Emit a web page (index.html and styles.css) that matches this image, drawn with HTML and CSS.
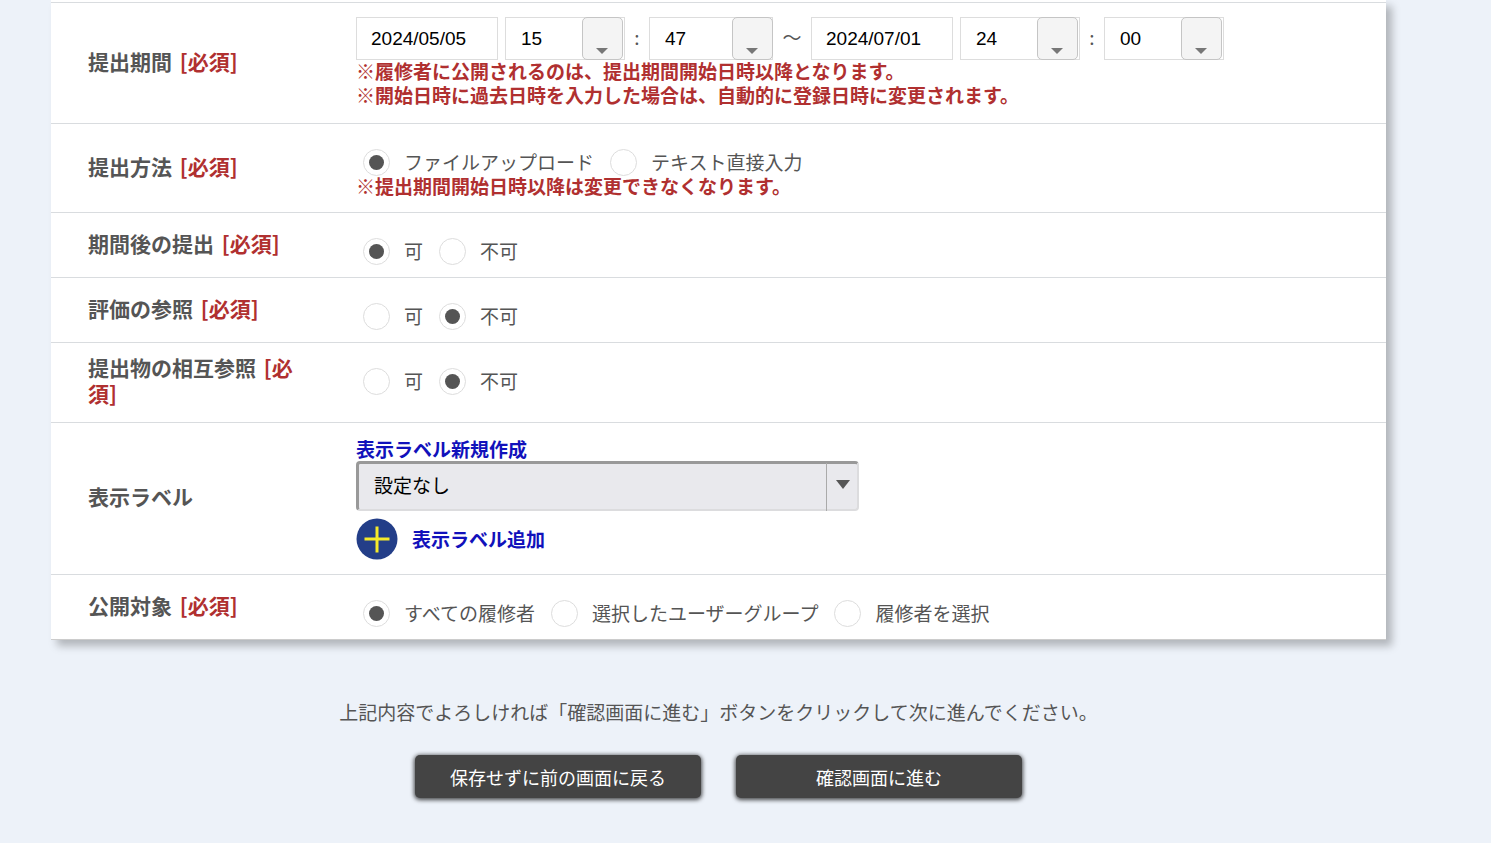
FILE: index.html
```html
<!DOCTYPE html>
<html lang="ja">
<head>
	<meta charset="utf-8">
	<title>レポート登録</title>
	<link rel="stylesheet" href="styles.css">
</head>
<body>
<form>
	<table class="settings">
		<tr class="period-row">
			<th scope="row">提出期間 <span class="required">[必須]</span></th>
			<td>
				<div class="period">
					<input type="text" class="date" value="2024/05/05" aria-label="開始日">
					<div class="combo">
						<select aria-label="開始時"><option>15</option></select>
						<span class="combo-arrow"></span>
					</div>
					<span class="colon">:</span>
					<div class="combo wide">
						<select aria-label="開始分"><option>47</option></select>
						<span class="combo-arrow"></span>
					</div>
					<span class="tilde">～</span>
					<input type="text" class="date" value="2024/07/01" aria-label="終了日">
					<div class="combo">
						<select aria-label="終了時"><option>24</option></select>
						<span class="combo-arrow"></span>
					</div>
					<span class="colon">:</span>
					<div class="combo">
						<select aria-label="終了分"><option>00</option></select>
						<span class="combo-arrow"></span>
					</div>
				</div>
				<p class="note">※履修者に公開されるのは、提出期間開始日時以降となります。</p>
				<p class="note">※開始日時に過去日時を入力した場合は、自動的に登録日時に変更されます。</p>
			</td>
		</tr>
		<tr>
			<th scope="row">提出方法 <span class="required">[必須]</span></th>
			<td>
				<div class="radios">
					<label><input type="radio" name="method" checked>ファイルアップロード</label>
					<label><input type="radio" name="method">テキスト直接入力</label>
				</div>
				<p class="note">※提出期間開始日時以降は変更できなくなります。</p>
			</td>
		</tr>
		<tr>
			<th scope="row">期間後の提出 <span class="required">[必須]</span></th>
			<td>
				<div class="radios">
					<label><input type="radio" name="late" checked>可</label>
					<label><input type="radio" name="late">不可</label>
				</div>
			</td>
		</tr>
		<tr>
			<th scope="row">評価の参照 <span class="required">[必須]</span></th>
			<td>
				<div class="radios">
					<label><input type="radio" name="grade">可</label>
					<label><input type="radio" name="grade" checked>不可</label>
				</div>
			</td>
		</tr>
		<tr>
			<th scope="row">提出物の相互参照 <span class="required">[必須]</span></th>
			<td>
				<div class="radios">
					<label><input type="radio" name="mutual">可</label>
					<label><input type="radio" name="mutual" checked>不可</label>
				</div>
			</td>
		</tr>
		<tr>
			<th scope="row">表示ラベル</th>
			<td>
				<a href="#" class="new-label">表示ラベル新規作成</a>
				<div class="label-select">
					<select aria-label="表示ラベル"><option>設定なし</option></select>
					<span class="label-arrow"></span>
				</div>
				<a href="#" class="add-label">
					<svg width="42" height="42" viewBox="0 0 42 42">
						<circle cx="21" cy="21" r="20.5" fill="#233e88"/>
						<path d="M8.500 21h25M21 8.500v26" stroke="#f5ea2a" stroke-width="3"/>
					</svg>
					表示ラベル追加
				</a>
			</td>
		</tr>
		<tr>
			<th scope="row">公開対象 <span class="required">[必須]</span></th>
			<td>
				<div class="radios">
					<label><input type="radio" name="target" checked>すべての履修者</label>
					<label><input type="radio" name="target">選択したユーザーグループ</label>
					<label><input type="radio" name="target">履修者を選択</label>
				</div>
			</td>
		</tr>
	</table>

	<p class="guide">上記内容でよろしければ「確認画面に進む」ボタンをクリックして次に進んでください。</p>
	<div class="buttons">
		<button type="button">保存せずに前の画面に戻る</button>
		<button type="submit">確認画面に進む</button>
	</div>
</form>
</body>
</html>
```

FILE: styles.css
```css
* {
	box-sizing: border-box;
}

body {
	margin: 0;
	background: #edf2f9;
	color: #555;
	font-family: "Noto Sans CJK JP", sans-serif;
	font-size: 19px;
	line-height: 24px;
}

form {
	padding: 0 105px 40px 51px;
}

p {
	margin: 0;
}

a {
	color: #1111bb;
	font-weight: bold;
	text-decoration: none;
}

.settings {
	width: 100%;
	padding-top: 2px;
	border-spacing: 0;
	border-bottom: 1px solid #ccc;
	background: #fff;
	box-shadow: 6px 6px 8px rgba(0, 0, 0, 0.25);
}

th, td {
	border-top: 1px solid #d9dcdf;
}

th {
	width: 305px;
	padding: 11px 50px 16px 37px;
	text-align: left;
	font-size: 21px;
	line-height: 26px;
}

td {
	padding: 14px 0;
	vertical-align: top;
}

.required {
	margin-left: 3px;
	color: #b03030;
}

.note {
	color: #b03030;
	font-weight: bold;
}

/* date and time fields */
.period-row {
	height: 121px;
}

.period {
	display: flex;
	height: 42px;
}

.period input, .period select {
	height: 43px;
	padding: 0 14px;
	border: 1px solid #ddd;
	background: #fff;
	color: #000;
	font-family: "Liberation Sans", sans-serif;
	font-size: 19px;
}

.date {
	width: 142px;
	margin-right: 7px;
}

.combo {
	position: relative;
	width: 120px;
}

.combo.wide {
	width: 124px;
}

.combo select {
	width: 100%;
	padding-left: 15px;
	appearance: none;
}

.combo-arrow {
	position: absolute;
	top: 0;
	right: 2px;
	width: 41px;
	height: 43px;
	border: 1px solid #c5c5c5;
	border-radius: 5px;
	background: #f4f4f4;
	pointer-events: none;
}

.wide .combo-arrow {
	right: 0;
}

.combo-arrow::after {
	content: "";
	position: absolute;
	left: 13px;
	bottom: 5px;
	border: 6px solid transparent;
	border-top-color: #777;
	border-bottom: 0;
}

.colon, .tilde {
	width: 24px;
	line-height: 40px;
	text-align: center;
}

.tilde {
	width: 38px;
}

/* radio buttons */
.radios {
	display: flex;
	gap: 16px;
	height: 36px;
	padding: 12px 0 0 7px;
}

.radios label {
	display: flex;
	align-items: center;
	gap: 14px;
}

.radios input {
	display: grid;
	place-items: center;
	width: 27px;
	height: 27px;
	margin: 0;
	border: 1px solid #ddd;
	border-radius: 50%;
	background: #fff;
	appearance: none;
}

.radios input:checked::before {
	content: "";
	width: 15px;
	height: 15px;
	border-radius: 50%;
	background: #555;
}

/* display label */
.new-label {
	display: block;
}

.label-select {
	position: relative;
	width: 503px;
	margin-bottom: 7px;
}

.label-select select {
	display: block;
	width: 100%;
	height: 50px;
	padding: 0 48px 3px 15px;
	border: 2px solid #dcdcde;
	border-top: 3px solid #999;
	border-left: 3px solid #999;
	border-radius: 4px;
	background: #e9e9ed;
	color: #000;
	font: inherit;
	appearance: none;
}

.label-arrow {
	position: absolute;
	top: 2px;
	right: 2px;
	bottom: 0;
	width: 31px;
	border-left: 1px solid #aaa;
	pointer-events: none;
}

.label-arrow::after {
	content: "";
	position: absolute;
	top: 17px;
	left: 9px;
	border: 7px solid transparent;
	border-top: 9px solid #555;
	border-bottom: 0;
}

.add-label {
	display: flex;
	align-items: center;
	gap: 14px;
}

/* footer */
.guide {
	margin-top: 60px;
	text-align: center;
}

.buttons {
	display: flex;
	justify-content: center;
	gap: 35px;
	margin-top: 31px;
}

.buttons button {
	width: 286px;
	height: 43px;
	border: 0;
	border-radius: 5px;
	background: #444;
	box-shadow: 0 1px 4px 1px rgba(0, 0, 0, 0.7);
	color: #fff;
	font-family: inherit;
	font-size: 18px;
}
```
